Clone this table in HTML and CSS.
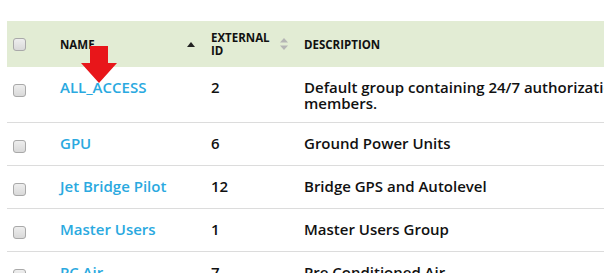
FILE: index.html
```html
<!DOCTYPE html>
<html lang="en">

<head>
    <meta charset="UTF-8">
    <title>Groups</title>
    <link rel="stylesheet" href="styles.css">
</head>

<body>
    <div class="grid">
        <table class="grid__table">
            <colgroup>
                <col class="grid__col-check">
                <col class="grid__col-name">
                <col class="grid__col-id">
                <col class="grid__col-desc">
                <col>
            </colgroup>
            <thead>
                <tr>
                    <th class="grid__check"><span class="checkbox"></span></th>
                    <th>
                        <div class="grid__head">
                            <span>Name</span>
                            <svg class="sort sort--asc" viewBox="0 0 8 5" width="8" height="5">
                                <polygon points="0 5,4 0,8 5" />
                            </svg>
                        </div>
                    </th>
                    <th>
                        <div class="grid__head">
                            <span>External<br>ID</span>
                            <svg class="sort" viewBox="0 0 8 12" width="8" height="12">
                                <polygon points="0 4.5,4 0,8 4.5" />
                                <polygon points="0 7.5,4 12,8 7.5" />
                            </svg>
                        </div>
                    </th>
                    <th>Description</th>
                    <th></th>
                </tr>
            </thead>
            <tbody>
                <tr>
                    <td class="grid__check"><span class="checkbox"></span></td>
                    <td><a href="#">ALL_ACCESS</a></td>
                    <td>2</td>
                    <td>Default group containing 24/7 authorization members.</td>
                    <td></td>
                </tr>
                <tr>
                    <td class="grid__check"><span class="checkbox"></span></td>
                    <td><a href="#">GPU</a></td>
                    <td>6</td>
                    <td>Ground Power Units</td>
                    <td></td>
                </tr>
                <tr>
                    <td class="grid__check"><span class="checkbox"></span></td>
                    <td><a href="#">Jet Bridge Pilot</a></td>
                    <td>12</td>
                    <td>Bridge GPS and Autolevel</td>
                    <td></td>
                </tr>
                <tr>
                    <td class="grid__check"><span class="checkbox"></span></td>
                    <td><a href="#">Master Users</a></td>
                    <td>1</td>
                    <td>Master Users Group</td>
                    <td></td>
                </tr>
                <tr>
                    <td class="grid__check"><span class="checkbox"></span></td>
                    <td><a href="#">PC Air</a></td>
                    <td>7</td>
                    <td>Pre Conditioned Air</td>
                    <td></td>
                </tr>
            </tbody>
        </table>

        <!-- annotation arrow -->
        <svg class="pointer" viewBox="0 0 36 37" width="36" height="37">
            <polygon points="9 0,27 0,27 17,36 17,18 37,0 17,9 17" />
        </svg>
    </div>
</body>

</html>
```

FILE: styles.css
```css
* {
    box-sizing: border-box;
    margin: 0;
    padding: 0;
}

:root {
    --head-bg: #e2ecd4;
    --line: #dcdcdc;
    --fg: #111;
    --link: #2aa9e0;
    --red: #e8161a;
}

body {
    background: #fff;
    color: var(--fg);
    font: 600 15px/16px "Open Sans", sans-serif;
    overflow: hidden;
    width: 604px;
    height: 273px;
}

.grid {
    position: relative;
    padding: 21px 0 0 7px;
}

.grid__table {
    border-collapse: collapse;
    table-layout: fixed;
    width: 800px;
}

.grid__col-check {
    width: 41px;
}

.grid__col-name {
    width: 151px;
}

.grid__col-id {
    width: 93px;
}

.grid__col-desc {
    width: 360px;
}

th {
    background-color: var(--head-bg);
    font-size: 11.5px;
    font-weight: 700;
    line-height: 13px;
    padding: 10px 4px 10px 12px;
    text-align: left;
    text-transform: uppercase;
    vertical-align: middle;
    height: 46px;
}

.grid__head {
    align-items: center;
    display: flex;
    justify-content: space-between;
}

.sort {
    fill: #222;
    flex-shrink: 0;
}

.sort:not(.sort--asc) {
    fill: #b5b5b5;
}

td {
    border-bottom: 1px solid var(--line);
    padding: 12px 12px 11px;
    vertical-align: top;
}

th.grid__check,
td.grid__check {
    padding: 0 0 0 6px;
}

td.grid__check {
    padding-top: 17px;
    padding-bottom: 12px;
}

.checkbox {
    background: linear-gradient(#eee, #d9d9d9);
    border: 1px solid #a9a9a9;
    border-radius: 3px;
    display: block;
    width: 13px;
    height: 13px;
}

a {
    color: var(--link);
    text-decoration: none;
}

.pointer {
    fill: var(--red);
    position: absolute;
    top: 46px;
    left: 81px;
}
```
